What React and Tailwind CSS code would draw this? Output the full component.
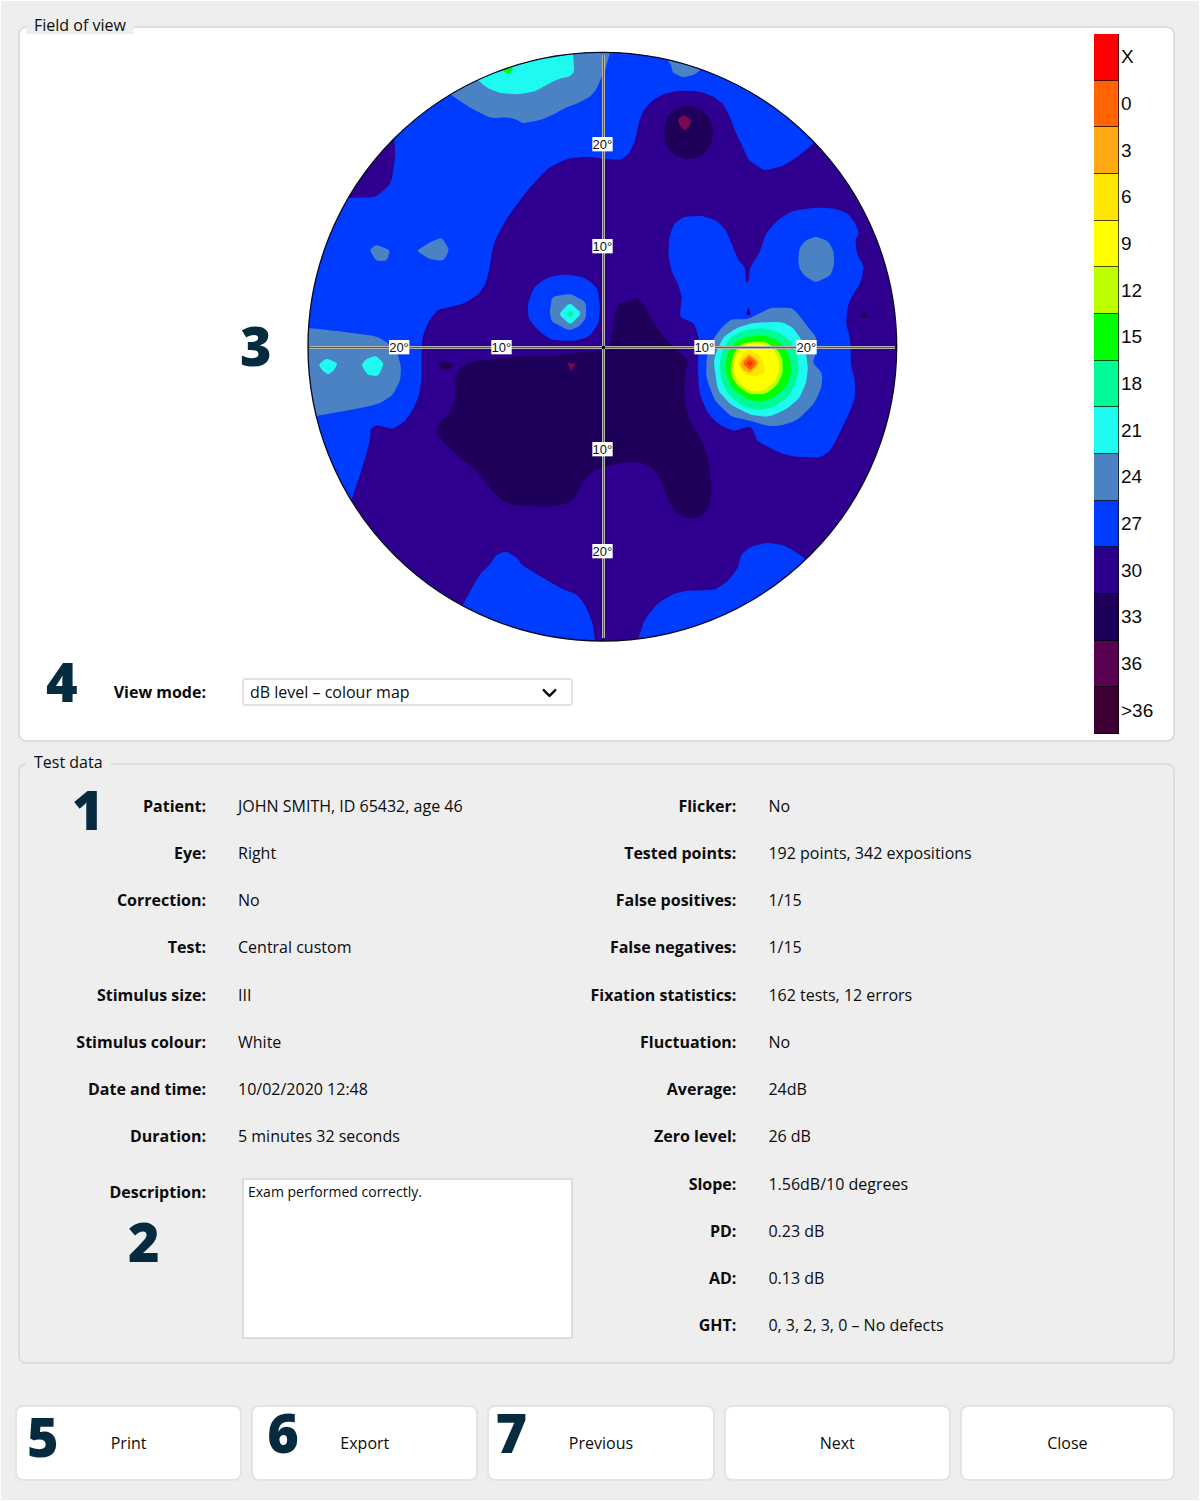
import React, { useState } from "react";
import { ChevronDown } from "lucide-react";

const COLORS = {
  8: "#ff3000",
  0: "#ff6400",
  3: "#ffaa14",
  6: "#ffe600",
  9: "#ffff00",
  12: "#beff00",
  15: "#00ff00",
  18: "#00fa96",
  21: "#1efaf0",
  24: "#4b82c3",
  27: "#003cff",
  30: "#2f008f",
  33: "#1e005a",
  36: "#780a50",
};

const SCALE = [
  ["X", "bg-[#ff0000]"],
  ["0", "bg-[#ff6400]"],
  ["3", "bg-[#ffaa14]"],
  ["6", "bg-[#ffe600]"],
  ["9", "bg-[#ffff00]"],
  ["12", "bg-[#beff00]"],
  ["15", "bg-[#00ff00]"],
  ["18", "bg-[#00fa96]"],
  ["21", "bg-[#1efaf0]"],
  ["24", "bg-[#4b82c3]"],
  ["27", "bg-[#003cff]"],
  ["30", "bg-[#2d008c]"],
  ["33", "bg-[#1e005a]"],
  ["36", "bg-[#5a0050]"],
  [">36", "bg-[#3c0032]"],
];

// Contours of equal sensitivity, painted in order.
const CONTOURS = [
  [27, "155,1370 185,1280 205,1210 210,1165 228,1155 275,1167 310,1145 335,1110 355,1065 362,1010 362,910 368,880 385,840 412,808 440,803 490,790 530,765 552,735 565,690 572,640 582,600 620,530 680,450 740,385 800,355 860,350 930,358 960,360 985,340 1003,300 1013,250 1025,215 1050,185 1085,163 1130,152 1190,153 1235,168 1270,195 1290,240 1305,280 1325,320 1342,360 1390,392 1445,378 1490,350 1540,308 1700,180 1700,-200 -200,-200 -200,1500 130,1450"],
  [30, "280,295 283,350 270,430 225,472 145,474 60,474 200,200 270,250"],
  [24, "450,165 510,205 570,235 615,232 645,238 665,250 720,240 760,222 790,205 830,190 865,172 885,150 900,115 910,100 922,55 932,20 900,-60 400,-60 400,130"],
  [21, "530,120 560,145 600,160 650,163 700,155 760,122 785,113 805,110 820,95 815,30 800,-60 480,-60 500,90"],
  [15, "606,92 622,104 637,86 620,76"],
  [24, "1095,55 1110,75 1115,98 1145,112 1180,105 1200,88 1200,40 1100,20"],
  [33, "1088,277 1095,240 1120,208 1155,197 1190,203 1225,230 1238,275 1228,320 1200,350 1160,358 1125,348 1095,320"],
  [36, "1130,237 1150,224 1172,242 1163,262 1151,272 1135,256"],
  [27, "1102,640 1105,590 1120,550 1150,530 1200,527 1245,540 1275,570 1295,620 1312,660 1332,682 1335,727 1343,727 1347,682 1375,640 1395,580 1430,540 1475,512 1540,503 1600,505 1640,520 1663,550 1674,580 1663,600 1667,640 1689,680 1680,725 1652,770 1640,800 1635,850 1648,900 1650,980 1662,1020 1662,1075 1640,1130 1600,1210 1585,1235 1555,1253 1480,1250 1440,1240 1370,1205 1358,1175 1350,1161 1330,1163 1300,1173 1255,1155 1220,1120 1195,1060 1190,980 1195,900 1180,850 1137,832 1139,800 1143,770 1130,730 1110,690"],
  [24, "1492,658 1495,625 1515,600 1545,590 1580,602 1597,630 1600,670 1590,705 1545,728 1510,707 1495,685"],
  [30, "1335,826 1342,798 1350,826"],
  [33, "1675,825 1690,815 1704,825 1690,835"],
  [24, "1235,900 1260,865 1290,838 1340,838 1375,820 1410,803 1470,803 1490,820 1520,860 1545,890 1548,930 1535,968 1564,1000 1562,1040 1540,1090 1490,1140 1440,1157 1400,1158 1340,1140 1290,1130 1240,1080 1215,1010 1217,950"],
  [21, "1238,965 1248,930 1268,890 1310,862 1360,848 1440,845 1475,862 1502,900 1515,940 1521,985 1515,1030 1495,1075 1460,1105 1405,1131 1350,1125 1290,1095 1250,1050"],
  [18, "1256,970 1264,930 1288,893 1330,870 1385,864 1435,877 1470,905 1488,945 1494,985 1485,1030 1462,1070 1420,1100 1375,1110 1328,1101 1283,1065 1260,1020"],
  [15, "1273,980 1279,942 1298,910 1335,891 1385,886 1425,898 1452,923 1468,960 1472,995 1458,1035 1428,1067 1385,1085 1342,1080 1298,1050 1279,1015"],
  [12, "1289,980 1298,940 1322,911 1355,905 1392,905 1428,928 1444,955 1445,1000 1427,1037 1392,1062 1348,1063 1312,1040 1292,1010"],
  [9, "1296,985 1305,945 1328,915 1365,907 1400,914 1425,940 1436,980 1425,1020 1390,1052 1352,1055 1312,1030"],
  [6, "1308,972 1325,940 1345,930 1377,945 1390,978 1390,1000 1360,1010 1330,1002"],
  [3, "1316,970 1344,940 1377,968 1348,1000 1326,990"],
  [0, "1324,970 1345,948 1369,968 1347,992"],
  [8, "1336,970 1346,960 1357,970 1346,980"],
  [27, "680,790 700,740 740,712 790,703 850,712 890,745 897,800 893,850 865,890 820,903 750,900 710,870 682,835"],
  [24, "753,770 808,761 854,785 856,832 835,860 803,871 752,845 746,815"],
  [21, "773,822 806,788 842,820 808,855"],
  [18, "797,822 808,812 820,822 808,832"],
  [24, "206,630 225,614 267,630 258,662 225,663"],
  [24, "346,632 385,608 422,592 445,630 427,663 385,657"],
  [24, "-100,850 120,875 225,888 262,910 290,940 300,980 298,1020 275,1065 240,1088 200,1100 50,1127 -100,1147"],
  [21, "53,973 77,955 110,970 100,990 82,1004 62,990"],
  [21, "181,975 195,957 225,947 249,970 232,1009 200,1005"],
  [33, "930,928 860,935 800,940 760,948 650,948 600,955 520,962 480,980 463,1010 462,1075 445,1125 415,1145 405,1175 425,1205 480,1255 530,1295 570,1350 610,1388 650,1397 750,1400 800,1390 825,1370 845,1325 880,1290 930,1275 980,1265 1020,1268 1055,1285 1080,1320 1095,1370 1125,1420 1165,1438 1200,1430 1225,1400 1232,1340 1220,1250 1205,1205 1165,1140 1150,1070 1153,1000 1162,960 1110,915 1080,880 1050,835 1035,800 1005,772 985,785 955,787 942,810 938,860 925,905"],
  [33, "411,970 430,961 464,975 440,991 418,987"],
  [36, "797,966 812,972 825,968 811,994"],
  [27, "485,1695 535,1605 570,1570 585,1545 615,1534 650,1555 662,1575 720,1610 780,1645 830,1665 855,1700 875,1750 885,1820 880,1900 300,1900 450,1760"],
  [27, "1012,1795 1030,1740 1070,1690 1120,1660 1160,1652 1240,1650 1280,1625 1310,1585 1320,1545 1345,1522 1395,1508 1450,1515 1512,1555 1700,1700 1600,1900 1000,1900"],
];

// Rounds the corners of a closed outline a little.
function outline(text) {
  const p = text.split(" ").map((s) => s.split(",").map(Number));
  const mix = (a, b, t) => (a[0] + (b[0] - a[0]) * t) + " " + (a[1] + (b[1] - a[1]) * t);
  return (
    p
      .map((q, i) => {
        const prev = p[(i + p.length - 1) % p.length];
        const next = p[(i + 1) % p.length];
        return (i ? "L" : "M") + mix(q, prev, 0.25) + "Q" + q[0] + " " + q[1] + " " + mix(q, next, 0.25);
      })
      .join("") + "Z"
  );
}

const TICKS = [
  [904, 312, "20°"],
  [904, 618, "10°"],
  [904, 1227, "10°"],
  [904, 1533, "20°"],
  [294, 921, "20°"],
  [601, 921, "10°"],
  [1210, 921, "10°"],
  [1516, 921, "20°"],
];

function FieldMap() {
  return (
    <svg viewBox="18 33 1773 1773" className="w-[591px] max-w-full" role="img" aria-label="Colour map of dB levels">
      <clipPath id="field">
        <circle cx="904" cy="920" r="883" />
      </clipPath>
      <g clipPath="url(#field)">
        <rect x="0" y="0" width="1810" height="1810" fill={COLORS[30]} />
        {CONTOURS.map(([level, pts], i) => (
          <path key={i} d={outline(pts)} fill={COLORS[level]} />
        ))}
      </g>
      <circle cx="904" cy="920" r="883" fill="none" stroke="#0a0a28" strokeWidth="4" />
      <g shapeRendering="crispEdges">
        <path d="M27 922.5H1781M907.5 45V1795" stroke="#b4b4ac" strokeWidth="9" />
        <path d="M27 922.5H1781M907.5 45V1795" stroke="#5c5c50" strokeWidth="3" />
      </g>
      <rect x="903" y="918" width="9" height="9" fill="#111" />
      {TICKS.map(([x, y, t], i) => (
        <g key={i}>
          <rect x={x - 30} y={y - 21} width="61" height="43" fill="#fff" />
          <text x={x} y={y + 14} textAnchor="middle" fontSize="39" fill="#111" className="font-['Liberation_Sans',sans-serif]">
            {t}
          </text>
        </g>
      ))}
    </svg>
  );
}

function Badge({ children, className }) {
  return (
    <span
      className={
        "pointer-events-none absolute font-['Open_Sans',sans-serif] text-[54px] leading-[54px] font-extrabold text-[#062b3f] " +
        className
      }
    >
      {children}
    </span>
  );
}

const LEFT = [
  ["Patient:", "JOHN SMITH, ID 65432, age 46"],
  ["Eye:", "Right"],
  ["Correction:", "No"],
  ["Test:", "Central custom"],
  ["Stimulus size:", "III"],
  ["Stimulus colour:", "White"],
  ["Date and time:", "10/02/2020 12:48"],
  ["Duration:", "5 minutes 32 seconds"],
];

const RIGHT = [
  ["Flicker:", "No"],
  ["Tested points:", "192 points, 342 expositions"],
  ["False positives:", "1/15"],
  ["False negatives:", "1/15"],
  ["Fixation statistics:", "162 tests, 12 errors"],
  ["Fluctuation:", "No"],
  ["Average:", "24dB"],
  ["Zero level:", "26 dB"],
  ["Slope:", "1.56dB/10 degrees"],
  ["PD:", "0.23 dB"],
  ["AD:", "0.13 dB"],
  ["GHT:", "0, 3, 2, 3, 0 – No defects"],
];

function Row({ label, value }) {
  return (
    <div className="flex items-center gap-8">
      <dt className="w-[186px] shrink-0 text-right font-bold">{label}</dt>
      <dd>{value}</dd>
    </div>
  );
}

const BUTTONS = [
  ["Print", "5", "left-3 top-1"],
  ["Export", "6", "left-4 top-0"],
  ["Previous", "7", "left-2 top-0"],
  ["Next"],
  ["Close"],
];

export default function App() {
  const [mode, setMode] = useState("colour");
  const [note, setNote] = useState("Exam performed correctly.");
  return (
    <main className="min-h-screen border border-white bg-[#eeeeee] pt-[19px] pr-6 pb-4 pl-[14px] font-['Open_Sans',sans-serif] text-base leading-6 text-[#0c0c0c]">
      <div className="ml-[3px]">
        <fieldset className="relative rounded-lg border-2 border-[#dcdcdc] bg-white">
          <legend className="ml-[6px] bg-[#eeeeee] px-2 pb-1 leading-[10px]">Field of view</legend>
          <div className="flex pb-[6px]">
            <div className="min-w-0 flex-1">
              <div className="flex justify-center pt-[17px] pl-[90px]">
                <FieldMap />
              </div>
              <div className="mt-9 flex items-center gap-9">
                <label htmlFor="mode" className="w-[186px] shrink-0 text-right font-bold">
                  View mode:
                </label>
                <div className="relative w-[331px]">
                  <select
                    id="mode"
                    value={mode}
                    onChange={(e) => setMode(e.target.value)}
                    className="h-7 w-full appearance-none rounded-sm border-2 border-[#e2e2e2] bg-white pl-[6px] leading-6"
                  >
                    <option value="colour">dB level – colour map</option>
                    <option value="grey">dB level – grey map</option>
                  </select>
                  <ChevronDown className="pointer-events-none absolute top-[3px] right-3 h-6 w-[23px]" strokeWidth={2.5} />
                </div>
              </div>
            </div>
            <ul className="grid min-h-[700px] w-[79px] auto-rows-fr font-['Liberation_Sans',sans-serif] text-[19px]">
              {SCALE.map(([t, c]) => (
                <li key={t} className="flex items-center gap-[2px]">
                  <span className={"h-full w-[25px] border-r border-b border-black/70 " + c} />
                  {t}
                </li>
              ))}
            </ul>
          </div>
          <Badge className="top-[284px] left-[220px]">3</Badge>
          <Badge className="top-[620px] left-[26px]">4</Badge>
        </fieldset>

        <fieldset className="relative mt-[15px] rounded-lg border-2 border-[#dcdcdc]">
          <legend className="ml-[6px] bg-[#eeeeee] px-2 pb-1 leading-[10px]">Test data</legend>
          <div className="flex pt-[11px] pb-[13px]">
            <dl className="grid min-h-[567px] w-[46%] grid-rows-12">
              {LEFT.map(([l, v]) => (
                <Row key={l} label={l} value={v} />
              ))}
              <div className="row-span-4 flex gap-9 pt-[18px] pb-[10px]">
                <dt className="w-[186px] shrink-0 pt-[2px] text-right font-bold">
                  <label htmlFor="note">Description:</label>
                </dt>
                <dd className="w-[331px]">
                  <textarea
                    id="note"
                    value={note}
                    onChange={(e) => setNote(e.target.value)}
                    className="block h-full w-full resize-none border-2 border-[#dcdcdc] bg-white px-1 text-sm leading-6"
                  />
                </dd>
              </div>
            </dl>
            <dl className="grid min-h-[567px] flex-1 grid-rows-12">
              {RIGHT.map(([l, v]) => (
                <Row key={l} label={l} value={v} />
              ))}
            </dl>
          </div>
          <Badge className="top-[11px] left-[52px]">1</Badge>
          <Badge className="top-[443px] left-[108px]">2</Badge>
        </fieldset>
      </div>

      <div className="mt-[41px] grid grid-cols-[227fr_227fr_227fr_227fr_215fr] gap-[9px]">
        {BUTTONS.map(([t, n, pos]) => (
          <div key={t} className="relative">
            <button type="button" className="h-[76px] w-full rounded-lg border-2 border-[#e4e4e4] bg-white">
              {t}
            </button>
            {n && <Badge className={pos}>{n}</Badge>}
          </div>
        ))}
      </div>
    </main>
  );
}
